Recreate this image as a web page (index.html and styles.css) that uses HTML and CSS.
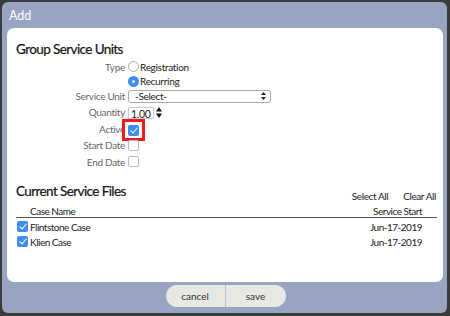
FILE: index.html
```html
<!DOCTYPE html>
<html lang="en">
<head>
    <meta charset="UTF-8">
    <title>Add</title>
    <link rel="stylesheet" href="styles.css">
</head>
<body>
    <div class="dialog">
        <div class="dialog-title">Add</div>

        <div class="panel">
            <h2>Group Service Units</h2>

            <!-- unit form -->
            <div class="form">
                <div class="label">Type</div>
                <div class="field"><span class="radio"></span>Registration</div>

                <div class="label"></div>
                <div class="field"><span class="radio on"></span>Recurring</div>

                <div class="label">Service Unit</div>
                <div class="field">
                    <div class="select">-Select-
                        <svg class="arrows" width="5" height="8" viewBox="0 0 5 8"><path d="M2.5 0L5 3H0z M2.5 8L5 5H0z" fill="#222"/></svg>
                    </div>
                </div>

                <div class="label">Quantity</div>
                <div class="field">
                    <div class="qty">1.00</div>
                    <svg class="spin" width="6" height="11" viewBox="0 0 6 11"><path d="M3 0L6 4.5H0z M3 11L6 6.5H0z" fill="#111"/></svg>
                </div>

                <div class="label">Active</div>
                <div class="field">
                    <span class="highlight"><span class="check on"></span></span>
                </div>

                <div class="label">Start Date</div>
                <div class="field"><span class="check"></span></div>

                <div class="label">End Date</div>
                <div class="field"><span class="check"></span></div>
            </div>

            <!-- service files -->
            <div class="files-head">
                <h2>Current Service Files</h2>
                <div class="links">
                    <span>Select All</span>
                    <span>Clear All</span>
                </div>
            </div>

            <div class="files">
                <div class="row head">
                    <span class="name">Case Name</span>
                    <span class="date">Service Start</span>
                </div>
                <div class="row">
                    <span class="name"><span class="check on"></span>Flintstone Case</span>
                    <span class="date">Jun-17-2019</span>
                </div>
                <div class="row">
                    <span class="name"><span class="check on"></span>Klien Case</span>
                    <span class="date">Jun-17-2019</span>
                </div>
            </div>
        </div>

        <div class="buttons">
            <button class="cancel">cancel</button>
            <button class="save">save</button>
        </div>
    </div>
</body>
</html>
```

FILE: styles.css
```css
html, body { margin: 0; height: 100%; }
body { background: #3b3b3b; font-family: Lato, "Noto Sans", sans-serif; color: #222; padding: 2px 3px 3px 2px; box-sizing: border-box; }

.dialog { background: #97a5c3; border-radius: 6px; height: 311px; padding: 0 4px 0 5px; box-sizing: border-box; }
.dialog-title { color: #fff; font-size: 12.5px; height: 26px; line-height: 27px; padding-left: 2px; }

.panel { background: #fff; border-radius: 7px; height: 254px; padding: 12px 6px 0 9px; box-sizing: border-box; }
.panel h2 { font-size: 13.5px; letter-spacing: -0.6px; font-weight: normal; margin: 0; line-height: 18px; color: #111; -webkit-text-stroke: 0.2px #111; }

.form { display: grid; grid-template-columns: 111px 1fr; grid-template-rows: 15px 14px 16px 16px 17px 16px 17px; margin-top: 1px; font-size: 10px; letter-spacing: -0.3px; }
.label { color: #666; text-align: right; display: flex; align-items: center; justify-content: flex-end; padding-right: 2px; }
.field { display: flex; align-items: center; color: #222; padding-left: 1px; }

.radio { width: 11px; height: 11px; border: 1px solid #aaa; border-radius: 50%; box-sizing: border-box; margin-right: 1px; background: #fff; }
.radio.on { border: 4px solid #3d8ef0; background: #fff; }

.select { width: 143px; height: 13px; border: 1px solid #aaa; border-radius: 3px; box-sizing: border-box; line-height: 11px; padding-left: 6px; position: relative; }
.arrows { position: absolute; right: 4px; top: 1.5px; }

.qty { width: 26px; height: 12px; border: 1px solid #ccc; box-sizing: border-box; font-size: 10.5px; line-height: 13px; padding-left: 2px; margin-top: 2px; }
.spin { margin-left: 2px; margin-top: 1px; }

.check { display: inline-block; width: 11px; height: 11px; border: 1px solid #bbb; border-radius: 2px; box-sizing: border-box; background: #fff; }
.check.on { border: none; background: #3d8ef0; position: relative; }
.check.on::after { content: ""; position: absolute; left: 4px; top: 1px; width: 3px; height: 6px; border: solid #fff; border-width: 0 1.5px 1.5px 0; transform: rotate(40deg); }

.highlight { display: inline-block; border: 3px solid #ee1c1c; padding: 3px 3px 2px 3px; margin-left: -6px; line-height: 0; margin-top: 2px; }

.files-head { display: flex; justify-content: space-between; align-items: flex-end; margin-top: 12px; }
.links { font-size: 10px; letter-spacing: -0.4px; display: flex; gap: 15px; padding-right: 1px; line-height: 12px; position: relative; top: 2px; }

.files { font-size: 10px; letter-spacing: -0.5px; }
.row { display: flex; justify-content: space-between; align-items: center; height: 15px; padding: 0 15px 0 1px; }
.row.head { border-bottom: 1px solid #555; height: 13px; margin-top: 4px; padding-left: 14px; }
.row .name { display: flex; align-items: center; gap: 2px; }
.files .row:nth-child(2) { margin-top: 1px; }

.buttons { display: flex; justify-content: center; padding-top: 3px; margin-left: 1px; }
.buttons button { width: 60px; height: 22px; border: none; background: #e7e7e3; font-family: inherit; font-size: 10px; color: #333; padding: 0; }
.cancel { border-radius: 11px 0 0 11px; border-right: 1px solid #b8c2d6 !important; }
.save { border-radius: 0 11px 11px 0; }
```
